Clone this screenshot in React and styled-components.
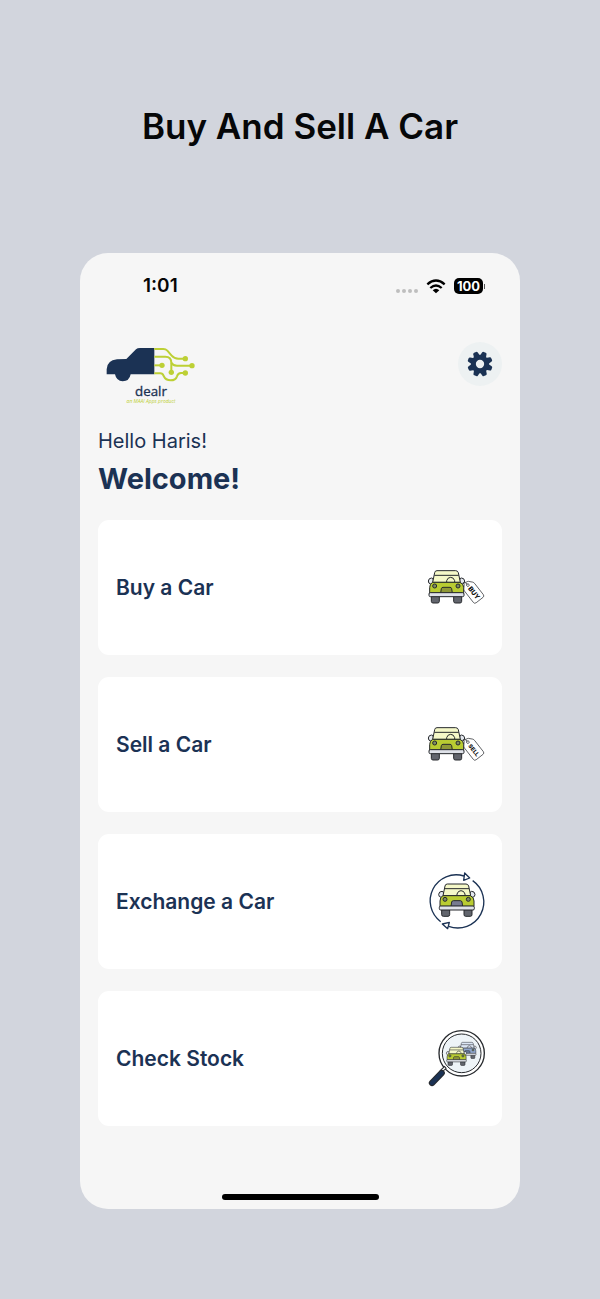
import React from "react";
import styled, { createGlobalStyle } from "styled-components";

const navy = "#1b3254";
const lime = "#bdd035";
const ink = "#26292d";

const GlobalStyle = createGlobalStyle`
  * { box-sizing: border-box; }
  body { margin: 0; background: #d2d5dd; font-family: Inter, "Open Sans", sans-serif; }
`;

const Page = styled.main`
  min-height: 100vh;
  padding: 102px 80px 90px;
  background: #d2d5dd;
`;

const Title = styled.h1`
  margin: 0 -40px 103px;
  font-size: 35px;
  line-height: 48px;
  font-weight: 600;
  text-align: center;
  color: #060708;
`;

const Phone = styled.section`
  display: flex;
  flex-direction: column;
  padding: 0 18px 9px;
  border-radius: 28px;
  background: #f6f6f6;
`;

const StatusBar = styled.div`
  display: flex;
  align-items: center;
  justify-content: space-between;
  padding: 20px 17px 0 45px;
`;

const Time = styled.span`
  font-size: 19px;
  line-height: 26px;
  font-weight: 600;
  color: #060606;
`;

const StatusIcons = styled.div`
  display: flex;
  align-items: center;
  gap: 8px;
`;

const Dots = styled.div`
  display: flex;
  gap: 2px;
  padding-top: 10px;
`;

const Dot = styled.i`
  width: 4px;
  height: 4px;
  border-radius: 50%;
  background: #bebebe;
`;

const Battery = styled.span`
  display: flex;
  align-items: center;
  gap: 1px;
  &::after {
    content: "";
    width: 1px;
    height: 5px;
    background: #555;
  }
`;

const Charge = styled.span`
  width: 29px;
  border-radius: 5px;
  background: #000;
  color: #fff;
  font-size: 13px;
  line-height: 16px;
  font-weight: 700;
  text-align: center;
`;

const Header = styled.header`
  display: flex;
  justify-content: space-between;
  align-items: flex-start;
  padding-top: 36px;
`;

const SettingsButton = styled.button`
  display: grid;
  place-items: center;
  width: 44px;
  height: 44px;
  margin-top: 7px;
  padding: 0;
  border: 0;
  border-radius: 50%;
  background: #edf1f2;
`;

const Greeting = styled.p`
  margin: 17px 0 0;
  font-size: 20px;
  line-height: 28px;
  color: ${navy};
`;

const Welcome = styled.h2`
  margin: 6px 0 23px;
  font-size: 29px;
  line-height: 36px;
  font-weight: 700;
  color: ${navy};
`;

const CardList = styled.nav`
  display: flex;
  flex-direction: column;
  gap: 22px;
`;

const Card = styled.button`
  display: flex;
  align-items: center;
  justify-content: space-between;
  height: 135px;
  padding: 0 7px 0 18px;
  border: 0;
  border-radius: 11px;
  background: #fff;
  color: ${navy};
  font: 600 21px/28px Inter, "Open Sans", sans-serif;
  text-align: left;
`;

const HomeBar = styled.div`
  align-self: center;
  width: 157px;
  height: 6px;
  margin-top: 68px;
  border-radius: 3px;
  background: #000;
`;

function Wifi() {
  return (
    <svg width="20" height="16" viewBox="0 0 60 48" fill="none" stroke="#000" strokeWidth="7" aria-hidden="true">
      <path d="M4 19 Q30 -4 56 19" />
      <path d="M13 30 Q30 15 47 30" />
      <path d="M20 37 Q30 28 40 37 L30 46 Z" fill="#000" stroke="none" />
    </svg>
  );
}

function Logo() {
  return (
    <svg width="107" height="75" viewBox="9 0 321 225" role="img" aria-label="dealr">
      <path
        d="M35 118 V103 Q36 76 66 73 L94 72 L123 43 Q127 39 135 39 H178 V118 H107 Q103 139 83 139 Q64 138 60 118 Z"
        fill={navy}
      />
      <g fill="none" stroke={lime} strokeWidth="6" strokeLinejoin="round">
        <path d="M178 42 H205 Q212 42 217 47 L230 62 Q238 71 250 71 H269" />
        <path d="M178 65 H211 Q229 65 229 84 V112" />
        <path d="M178 91 H200" />
        <path d="M229 83 Q234 92 246 92 H290" />
        <path d="M178 115 H196 Q203 115 206 123 Q212 136 227 136 Q242 136 246 124 Q249 114 258 114 H271" />
      </g>
      <g fill={lime}>
        <circle cx="271" cy="71" r="8" />
        <circle cx="291" cy="92" r="8" />
        <circle cx="271" cy="114" r="8" />
        <circle cx="229" cy="112" r="8" />
        <circle cx="201" cy="91" r="8" />
      </g>
      <text x="168" y="184" textAnchor="middle" fontFamily="'Open Sans', sans-serif" fontSize="40" fill={navy} stroke={navy} strokeWidth="1">
        dealr
      </text>
      <text x="168" y="203" textAnchor="middle" fontFamily="'Open Sans', sans-serif" fontStyle="italic" fontSize="15" fill={lime}>
        an MAAI Apps product
      </text>
    </svg>
  );
}

function Gear() {
  return (
    <svg width="26" height="26" viewBox="-39 -39 78 78" aria-hidden="true">
      <g fill={navy}>
        {[22, 67, 112, 157, 202, 247, 292, 337].map((angle) => (
          <path key={angle} d="M-10 -22 L-7 -35 Q-6 -38 -3 -38 H3 Q6 -38 7 -35 L10 -22 Z" transform={`rotate(${angle})`} />
        ))}
      </g>
      <circle r="20" fill="none" stroke={navy} strokeWidth="15" />
    </svg>
  );
}

function Car({ transform, body = "#b9cc32", glass = "#f5f8c8", grille = "#8f9836" }) {
  return (
    <g transform={transform} stroke={ink} strokeWidth="3" strokeLinejoin="round">
      <path d="M34 109 H58 V124 Q58 129 53 129 H39 Q34 129 34 124 Z M101 109 H125 V124 Q125 129 120 129 H106 Q101 129 101 124 Z" fill="#62656d" />
      <path d="M39 72 H32 Q25 71 25 63 Q26 54 35 54 Q40 54 40 61 Z M119 72 H127 Q134 71 134 63 Q133 54 124 54 Q119 54 119 61 Z" fill="#e4e8ef" />
      <path d="M44 38 Q45 32 51 32 H107 Q113 32 115 38 L121 67 H38 Z" fill={glass} />
      <path d="M43 46 H116" fill="none" />
      <path d="M80 66 V62 Q83 52 92 52 Q101 52 104 62 V66" fill="none" />
      <path d="M38 67 H120 Q131 71 131 83 V99 H29 V83 Q29 71 38 67 Z" fill={body} />
      <circle cx="44" cy="78" r="6" fill="#7e8c61" />
      <circle cx="114" cy="78" r="6" fill="#7e8c61" />
      <path d="M62 99 L64 86 Q65 82 69 82 H90 Q94 82 95 86 L97 99 Z" fill={grille} />
      <rect x="27" y="98" width="105" height="12" rx="4" fill="#dfe2e9" />
    </g>
  );
}

function TagIcon({ word }) {
  return (
    <svg width="75" height="75" viewBox="0 0 225 225" aria-hidden="true">
      <Car transform="translate(0 30)" />
      <g transform="translate(159 125) rotate(52)">
        <path
          d="M-33 -8 L-23 -17 Q-20 -19 -16 -19 H26 Q32 -19 32 -13 V13 Q32 19 26 19 H-16 Q-20 19 -23 17 L-33 8 Q-35 5 -35 0 Q-35 -5 -33 -8 Z"
          fill="#fff"
          stroke={ink}
          strokeWidth="2"
        />
        <circle cx="-25" cy="0" r="4" fill="#fff" stroke={ink} strokeWidth="2" />
        <text x="5" y="7" textAnchor="middle" fontFamily="Inter, sans-serif" fontWeight="800" fontSize={word.length > 3 ? 17 : 20} fill="#111">
          {word}
        </text>
      </g>
      <path d="M128 99 Q138 92 141 104" fill="none" stroke={ink} strokeWidth="2" />
    </svg>
  );
}

function ExchangeIcon() {
  return (
    <svg width="75" height="75" viewBox="0 0 225 225" aria-hidden="true">
      <g fill="none" stroke={navy} strokeWidth="4">
        <path d="M62 173 A78 78 0 0 1 132 36" />
        <path d="M158 50 A78 78 0 0 1 86 187" />
        <path d="M134 27 L149 42 L131 49 Z" fill="#fff" strokeLinejoin="round" />
        <path d="M67 180 L88 175 L83 194 Z" fill="#fff" strokeLinejoin="round" />
      </g>
      <Car transform="translate(31 28)" grille="#777b91" />
    </svg>
  );
}

function StockIcon() {
  return (
    <svg width="75" height="75" viewBox="0 0 225 225" aria-hidden="true">
      <circle cx="125" cy="97" r="68" fill="#fff" stroke={ink} strokeWidth="4" />
      <circle cx="125" cy="97" r="58" fill="#eef4f8" stroke={ink} strokeWidth="3" />
      <Car transform="translate(102 48) scale(.5)" body="#8fa5cb" glass="#dce6f5" grille="#66799e" />
      <Car transform="translate(65 61) scale(.56)" />
      <path d="M62 152 L77 138" stroke={ink} strokeWidth="10" />
      <path d="M64 151 L75 140" stroke="#fff" strokeWidth="4" />
      <path d="M36 186 L65 156" stroke={ink} strokeWidth="19" strokeLinecap="round" />
      <path d="M36 186 L65 156" stroke={navy} strokeWidth="13" strokeLinecap="round" />
    </svg>
  );
}

const actions = [
  { label: "Buy a Car", icon: <TagIcon word="BUY" /> },
  { label: "Sell a Car", icon: <TagIcon word="SELL" /> },
  { label: "Exchange a Car", icon: <ExchangeIcon /> },
  { label: "Check Stock", icon: <StockIcon /> },
];

export default function App() {
  return (
    <Page>
      <GlobalStyle />
      <Title>Buy And Sell A Car</Title>
      <Phone>
        <StatusBar>
          <Time>1:01</Time>
          <StatusIcons>
            <Dots>
              <Dot />
              <Dot />
              <Dot />
              <Dot />
            </Dots>
            <Wifi />
            <Battery>
              <Charge>100</Charge>
            </Battery>
          </StatusIcons>
        </StatusBar>
        <Header>
          <Logo />
          <SettingsButton type="button" aria-label="Settings">
            <Gear />
          </SettingsButton>
        </Header>
        <Greeting>Hello Haris!</Greeting>
        <Welcome>Welcome!</Welcome>
        <CardList aria-label="Car services">
          {actions.map(({ label, icon }) => (
            <Card type="button" key={label}>
              {label}
              {icon}
            </Card>
          ))}
        </CardList>
        <HomeBar />
      </Phone>
    </Page>
  );
}
